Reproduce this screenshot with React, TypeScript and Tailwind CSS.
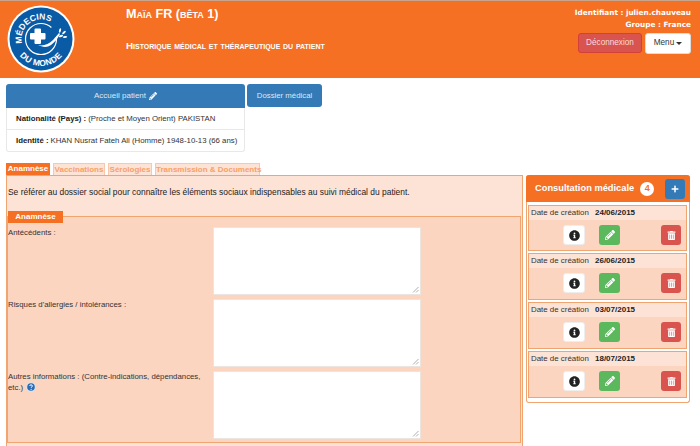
import React from "react";
import { FaInfoCircle, FaPencilAlt, FaTrashAlt, FaPlus } from "react-icons/fa";

function Logo() {
  return (
    <svg width="68" height="68" viewBox="0 0 68 68" className="shrink-0">
      <circle cx="34" cy="34" r="33.500" fill="#fff" />
      <circle cx="34" cy="34" r="31.500" fill="#0a5ba6" />
      <circle cx="34" cy="34" r="15.500" fill="none" stroke="#fff" strokeWidth="1.200" strokeDasharray="86.600 10.800" strokeDashoffset="-94.700" />
      <path d="M27.500 24.500a1 1 0 0 1 1-1h4.500a1 1 0 0 1 1 1V28h3.500a1 1 0 0 1 1 1v4.500a1 1 0 0 1-1 1H34v3.500a1 1 0 0 1-1 1h-4.500a1 1 0 0 1-1-1v-3.500H24a1 1 0 0 1-1-1V29a1 1 0 0 1 1-1h3.500z" fill="#fff" />
      <path d="M31 40c5 1.500 11-1 15-5l6-7 1 1c-2 4-5 8-9 11-4 3-9 2-13 0z" fill="#fff" />
      <ellipse cx="53" cy="25.500" rx="1" ry="2.200" fill="#fff" transform="rotate(15 53 25.500)" />
      <ellipse cx="57" cy="27.500" rx="1" ry="2.200" fill="#fff" transform="rotate(50 57 27.500)" />
      <ellipse cx="58" cy="32" rx="1" ry="2.200" fill="#fff" transform="rotate(85 58 32)" />
      <ellipse cx="54" cy="31" rx="1" ry="2.200" fill="#fff" transform="rotate(70 54 31)" />
      <defs>
        <path id="arcTop" d="M15 38.400A19.500 19.500 0 0 1 50 22.800" />
        <path id="arcBottom" d="M7 34A27 27 0 0 0 61 34" />
      </defs>
      <text fontFamily="'Liberation Sans', sans-serif" fontWeight="700" fontSize="8.500" fill="#fff">
        <textPath href="#arcTop">MÉDECINS</textPath>
      </text>
      <text fontFamily="'Liberation Sans', sans-serif" fontWeight="700" fontSize="8.500" fill="#fff" letterSpacing="0.3">
        <textPath href="#arcBottom" startOffset="50%" textAnchor="middle">DU MONDE</textPath>
      </text>
    </svg>
  );
}

function Help() {
  return (
    <svg width="10" height="10" viewBox="0 0 10 10" className="ml-[1px] inline-block align-[-2px]">
      <circle cx="5" cy="5" r="4.800" fill="#d5e3f2" />
      <circle cx="5" cy="5" r="3.800" fill="#2b6cb5" />
      <path d="M3.700 4c0-1.600 2.700-1.600 2.700 0 0 1-1.300 1-1.300 1.800" fill="none" stroke="#fff" strokeWidth="1" />
      <circle cx="5.100" cy="7.300" r=".6" fill="#fff" />
    </svg>
  );
}

function Field({ label }: { label: React.ReactNode }) {
  return (
    <div className="flex items-start">
      <div className="w-[205px] text-[7.800px] leading-[11px] text-[#333]">{label}</div>
      <div className="relative h-[68px] w-[208px] border border-[#ece4df] bg-white">
        <svg width="7" height="7" viewBox="0 0 7 7" className="absolute bottom-[1px] right-[1px]">
          <path d="M6.500 1L1 6.500M6.500 4L4 6.500" stroke="#999" strokeWidth=".8" />
        </svg>
      </div>
    </div>
  );
}

function Consultation({ date, first }: { date: string; first?: boolean }) {
  return (
    <div className={first ? "h-[46px] border border-[#f0a470] bg-[#fbd5c0]" : "h-[47px] border border-[#f0a470] bg-[#fbd5c0]"}>
      <div className="flex h-[14px] items-center bg-[#fde3d5] pl-[2px] text-[7.900px] text-[#333]">
        <span className="w-[64px] whitespace-nowrap">Date de création</span>
        <b className="text-[8px] text-[#222]">{date}</b>
      </div>
      <div className="flex items-start pl-[34px] pt-[5px]">
        <span className="flex h-[20px] w-[22px] items-center justify-center rounded-[3px] border border-[#eee] bg-white">
          <FaInfoCircle className="text-[11px] text-[#222]" />
        </span>
        <span className="ml-[14px] flex h-[20px] w-[21px] items-center justify-center rounded-[3px] bg-[#5cb85c]">
          <FaPencilAlt className="text-[10px] text-white" />
        </span>
        <span className="ml-[41px] flex h-[20px] w-[20px] items-center justify-center rounded-[3px] bg-[#d9534f]">
          <FaTrashAlt className="text-[9px] text-white" />
        </span>
      </div>
    </div>
  );
}

export default function App() {
  return (
    <div className="h-[446px] w-[700px] overflow-hidden bg-white font-['Liberation_Sans',Arial,sans-serif] text-[7.800px] text-[#333]">
      <header className="flex h-[78px] border-t border-[#c9a48c] bg-[#f57022] text-white">
        <div className="w-[126px] pl-[7px] pt-[4px]">
          <Logo />
        </div>
        <div className="flex-1 font-bold [font-variant:small-caps]">
          <div className="mt-[3px] text-[12.600px] leading-[20px]">Maïa FR (bêta 1)</div>
          <div className="mt-[15px] text-[9.800px] leading-[14px]">Historique médical et thérapeutique du patient</div>
        </div>
        <div className="flex flex-col items-end pr-[9px] pt-[6px] font-['DejaVu_Sans',sans-serif] text-[7.300px] font-bold">
          <div className="leading-[12px]">Identifiant : julien.chauveau</div>
          <div className="leading-[12px]">Groupe : France</div>
          <div className="mt-[2px] flex gap-[3px] font-['Liberation_Sans',sans-serif] text-[8.200px] font-normal">
            <span className="flex h-[20px] w-[64px] items-center justify-center rounded-[3px] border border-[#d43f3a] bg-[#d9534f] text-[#f8dcdc]">Déconnexion</span>
            <span className="flex h-[21px] w-[46px] items-center justify-center gap-[2px] rounded-[3px] border border-[#ddd] bg-white text-[#333]">
              Menu
              <span className="h-0 w-0 border-x-[3px] border-t-[3px] border-x-transparent border-t-[#333]" />
            </span>
          </div>
        </div>
      </header>

      <div className="ml-[6px] mt-[6px] flex h-[79px] items-start gap-[2px]">
        <div className="w-[239px]">
          <div className="flex h-[24px] items-center justify-center gap-[3px] rounded-t-[3px] bg-[#337ab7] text-[8px] text-[#dce8f3]">
            Accueil patient
            <FaPencilAlt className="text-[8px] text-white" />
          </div>
          <div className="whitespace-nowrap rounded-b-[3px] border-x border-b border-[#e8e8e8]">
            <div className="flex h-[22px] items-center border-b border-[#e8e8e8] pl-[9px]">
              <b className="mr-[2px] text-[#222]">Nationalité (Pays) :</b> (Proche et Moyen Orient) PAKISTAN
            </div>
            <div className="flex h-[21px] items-center pl-[9px]">
              <b className="mr-[2px] text-[#222]">Identité :</b> KHAN Nusrat Fateh Ali (Homme) 1948-10-13 (66 ans)
            </div>
          </div>
        </div>
        <div className="flex h-[23px] w-[75px] items-center justify-center rounded-[3px] bg-[#337ab7] text-[#dce8f3]">Dossier médical</div>
      </div>

      <div className="flex items-start pl-[6px]">
        <div className="w-[517px]">
          <div className="flex h-[12px] gap-[3px] whitespace-nowrap text-[8px] font-bold leading-[12px]">
            <span className="w-[44px] bg-[#f57022] text-center text-white">Anamnèse</span>
            <span className="w-[52px] border border-b-0 border-[#f5c9ae] bg-[#fde3d5] text-center leading-[11px] text-[#f7a069]">Vaccinations</span>
            <span className="w-[44px] border border-b-0 border-[#f5c9ae] bg-[#fde3d5] text-center leading-[11px] text-[#f7a069]">Sérologies</span>
            <span className="w-[105px] border border-b-0 border-[#f5c9ae] bg-[#fde3d5] text-center leading-[11px] text-[#f7a069]">Transmission &amp; Documents</span>
          </div>
          <div className="h-[290px] border border-[#f0a470] bg-[#fde3d5] pr-[1px]">
            <p className="pl-[1px] pt-[10px] text-[8.430px] leading-[12px] text-[#222]">
              Se référer au dossier social pour connaître les éléments sociaux indispensables au suivi médical du patient.
            </p>
            <div className="relative mt-[18px] h-[227px] border border-[#f0a470] bg-[#fbd5c0] pt-[10px]">
              <div className="absolute -top-[6px] left-0 h-[12px] w-[55px] bg-[#f57022] text-center text-[8px] font-bold leading-[12px] text-white">Anamnèse</div>
              <div className="flex flex-col gap-[4px]">
                <Field label="Antécédents :" />
                <Field label="Risques d'allergies / intolérances :" />
                <Field
                  label={
                    <>
                      Autres informations : (Contre-indications, dépendances,
                      <br />
                      etc.) <Help />
                    </>
                  }
                />
              </div>
            </div>
          </div>
        </div>

        <div className="ml-[3px] mt-[12px] w-[164px] rounded-[3px] border-x border-b border-[#f0a470] pb-[4px]">
          <div className="-mx-[1px] flex h-[27px] items-center rounded-t-[3px] bg-[#f57022] pl-[9px] text-white">
            <b className="whitespace-nowrap text-[9.300px]">Consultation médicale</b>
            <span className="ml-[6px] flex h-[14px] w-[14px] items-center justify-center rounded-full bg-white text-[9px] font-bold text-[#f57022]">4</span>
            <span className="ml-[11px] flex h-[20px] w-[20px] items-center justify-center rounded-[3px] bg-[#337ab7]">
              <FaPlus className="text-[8px] text-white" />
            </span>
          </div>
          <div className="flex flex-col gap-[2px] pl-[1px] pr-[2px] pt-[3px]">
            <Consultation first date="24/06/2015" />
            <Consultation date="26/06/2015" />
            <Consultation date="03/07/2015" />
            <Consultation date="18/07/2015" />
          </div>
        </div>
      </div>
    </div>
  );
}
